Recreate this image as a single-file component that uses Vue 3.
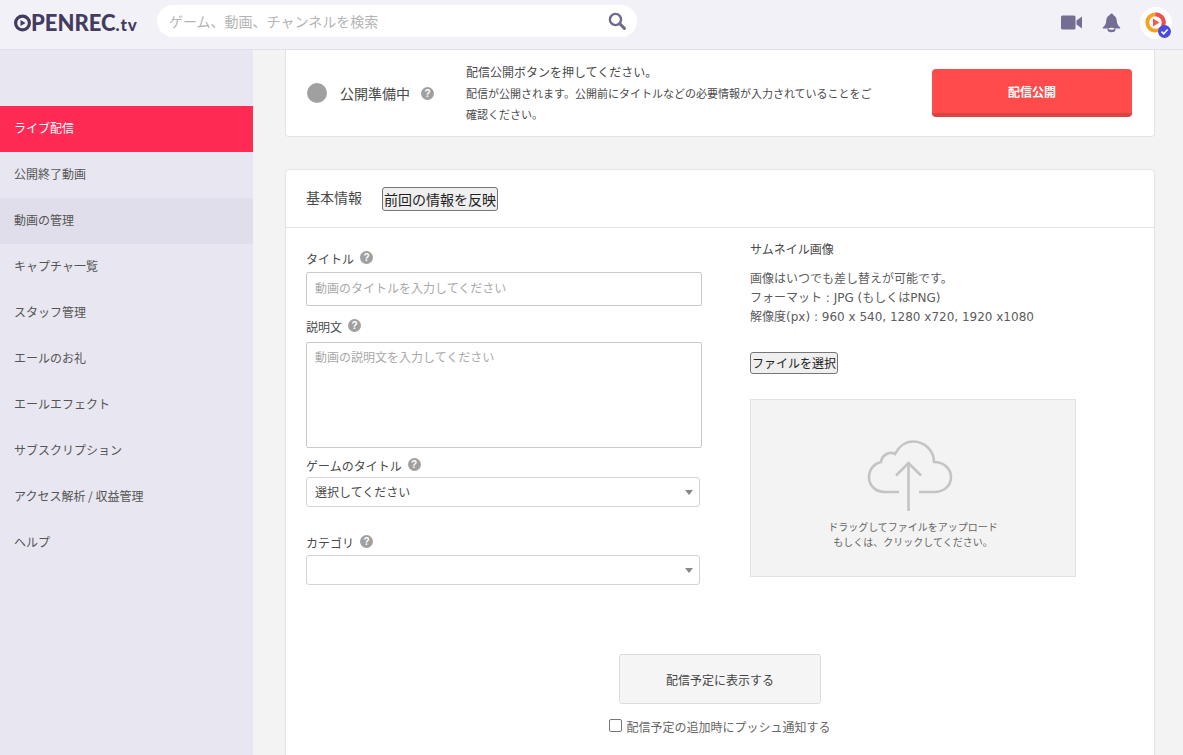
<template>
  <div class="page">
    <header class="topbar">
      <div class="logo">
        <svg class="logo-o" width="18" height="18" viewBox="0 0 18 18">
          <circle cx="8.5" cy="9" r="6.9" fill="none" stroke="#433c5f" stroke-width="3.2" />
          <path d="M6.5 5.9 L11.6 9 L6.5 12.1 Z" fill="#433c5f" />
        </svg>
        <span class="logo-main">PENREC</span><span class="logo-tv">.tv</span>
      </div>
      <div class="search">
        <span class="search-text">ゲーム、動画、チャンネルを検索</span>
        <svg width="18" height="18" viewBox="0 0 18 18">
          <circle cx="7.5" cy="7.5" r="5.6" fill="none" stroke="#6f6a8a" stroke-width="2.4" />
          <path d="M11.8 11.8 L16.4 16.4" stroke="#6f6a8a" stroke-width="3" stroke-linecap="round" />
        </svg>
      </div>
      <div class="top-icons">
        <svg class="icon-video" width="21" height="15" viewBox="0 0 21 15">
          <rect x="0" y="0.5" width="14.5" height="14" rx="1.5" fill="#746e94" />
          <path d="M15.5 5.5 L21 1.5 V13.5 L15.5 9.5 Z" fill="#746e94" />
        </svg>
        <svg width="19" height="20" viewBox="0 0 19 20">
          <circle cx="9.5" cy="2.2" r="1.8" fill="#746e94" />
          <path d="M9.5 2 C5.6 2 4.4 5 4.2 8 C4 11 3 12.6 1.2 14 C0.4 14.7 0.6 15.6 1.6 15.6 H17.4 C18.4 15.6 18.6 14.7 17.8 14 C16 12.6 15 11 14.8 8 C14.6 5 13.4 2 9.5 2 Z" fill="#746e94" />
          <ellipse cx="9.5" cy="16.8" rx="4" ry="2.4" fill="#746e94" />
          <ellipse cx="9.5" cy="15.8" rx="3" ry="1" fill="#f2f1f8" />
        </svg>
        <div class="avatar">
          <svg width="32" height="32" viewBox="0 0 32 32">
            <circle cx="16" cy="16" r="16" fill="#fff" />
            <circle cx="15.5" cy="15.5" r="8.2" fill="none" stroke="#f7a11f" stroke-width="3.8" />
            <path d="M15.5 7.3 A8.2 8.2 0 0 1 23 19" fill="none" stroke="#ef4d57" stroke-width="3.8" />
            <path d="M13 11.5 L19.5 15.5 L13 19.5 Z" fill="#f0594f" />
            <circle cx="24.5" cy="24.5" r="6.5" fill="#4a4adf" />
            <path d="M21.5 24.6 L23.7 26.8 L27.6 22.6" fill="none" stroke="#fff" stroke-width="1.5" />
          </svg>
        </div>
      </div>
    </header>

    <div class="layout">
      <nav class="sidebar">
        <a
          v-for="item in menu"
          :key="item.label"
          class="nav-item"
          :class="{ active: item.active, hover: item.hover }"
        >{{ item.label }}</a>
      </nav>

      <main class="content">
        <section class="card status-card">
          <span class="status-dot"></span>
          <span class="status-label">公開準備中</span>
          <span class="help help-status">?</span>
          <div class="status-text">
            <p class="status-first">配信公開ボタンを押してください。</p>
            <p>配信が公開されます。公開前にタイトルなどの必要情報が入力されていることをご確認ください。</p>
          </div>
          <button class="publish" type="button">配信公開</button>
        </section>

        <section class="card form-card">
          <div class="form-head">
            <span class="head-title">基本情報</span>
            <button class="native-btn" type="button">前回の情報を反映</button>
          </div>
          <div class="form-body">
            <div class="col-left">
              <div class="label label-title">タイトル<span class="help">?</span></div>
              <div class="input placeholder">動画のタイトルを入力してください</div>
              <div class="label label-desc">説明文<span class="help">?</span></div>
              <div class="textarea placeholder">動画の説明文を入力してください</div>
              <div class="label label-game">ゲームのタイトル<span class="help">?</span></div>
              <div class="select">選択してください<span class="caret"></span></div>
              <div class="label label-cat">カテゴリ<span class="help">?</span></div>
              <div class="select"><span class="caret"></span></div>
            </div>
            <div class="col-right">
              <div class="thumb-title">サムネイル画像</div>
              <p class="thumb-info">画像はいつでも差し替えが可能です。<br />フォーマット : JPG (もしくはPNG)<br />解像度(px) : 960 x 540, 1280 x720, 1920 x1080</p>
              <button class="native-btn file-btn" type="button">ファイルを選択</button>
              <div class="dropzone">
                <svg class="cloud" width="88" height="72" viewBox="0 0 88 72">
                  <path d="M32 52 H18 C8 52 2 45 2 37 C2 29 8 23 14 22 C15 15 22 11 28 14 C32 6 39 1.5 46 1.5 C58 1.5 67 11 67 22 C77 22 84 29 84 37 C84 46 77 52 67 52 H52" fill="none" stroke="#c4c4c4" stroke-width="2.6" />
                  <path d="M41.5 71 V23 M29 35.5 L41.5 23 L54 35.5" fill="none" stroke="#c4c4c4" stroke-width="2.6" />
                </svg>
                <p class="drop-text">ドラッグしてファイルをアップロード<br />もしくは、クリックしてください。</p>
              </div>
            </div>
          </div>
          <div class="form-foot">
            <button class="schedule" type="button">配信予定に表示する</button>
            <label class="push"><span class="checkbox"></span>配信予定の追加時にプッシュ通知する</label>
          </div>
        </section>
      </main>
    </div>
  </div>
</template>

<script setup>
const menu = [
  { label: 'ライブ配信', active: true },
  { label: '公開終了動画' },
  { label: '動画の管理', hover: true },
  { label: 'キャプチャ一覧' },
  { label: 'スタッフ管理' },
  { label: 'エールのお礼' },
  { label: 'エールエフェクト' },
  { label: 'サブスクリプション' },
  { label: 'アクセス解析 / 収益管理' },
  { label: 'ヘルプ' }
]
</script>

<style>
html, body {
  margin: 0;
  overflow: hidden;
}
</style>

<style scoped>
.page {
  width: 1183px;
  height: 755px;
  overflow: hidden;
  font-family: "Noto Sans CJK JP", "Liberation Sans", sans-serif;
  font-size: 12px;
  color: #4a4a4a;
  background: #f3f3f3;
}

.topbar {
  height: 49px;
  background: #f2f1f8;
  border-bottom: 1px solid #e2e0ea;
  display: flex;
  align-items: center;
  padding: 0 11px 0 14px;
}

.logo {
  width: 143px;
  display: flex;
  align-items: center;
  color: #433c5f;
  font-family: Lato, "Liberation Sans", sans-serif;
  font-weight: 900;
  line-height: 1;
  margin-top: -3px;
}

.logo-main {
  font-size: 22px;
  margin-left: -1px;
  letter-spacing: 0;
}

.logo-tv {
  font-size: 17px;
  font-weight: 900;
  margin-top: 3px;
  letter-spacing: 0.9px;
}

.search {
  width: 480px;
  height: 32px;
  margin-top: -7px;
  box-sizing: border-box;
  background: #fff;
  border-radius: 16px;
  display: flex;
  align-items: center;
  justify-content: space-between;
  padding: 0 11px 0 12px;
}

.search-text {
  font-size: 14px;
  color: #b4b4b4;
}

.top-icons {
  margin-left: auto;
  display: flex;
  align-items: center;
  margin-top: -4px;
}

.icon-video {
  margin-right: 20px;
}

.avatar {
  margin-left: 19px;
  height: 32px;
}

.layout {
  display: flex;
  height: 705px;
}

.sidebar {
  width: 253px;
  flex: none;
  background: #e8e6f0;
  padding-top: 56px;
  box-sizing: border-box;
}

.nav-item {
  display: block;
  height: 46px;
  line-height: 44px;
  padding-left: 14px;
  font-size: 12px;
  color: #555;
}

.nav-item.active {
  background: #ff2b55;
  color: #fff;
}

.nav-item.hover {
  background: #e0deea;
}

.content {
  flex: 1;
  padding: 0 28px 0 32px;
}

.card {
  background: #fff;
  border: 1px solid #e4e4e4;
  border-radius: 4px;
  box-sizing: border-box;
}

.status-card {
  height: 87px;
  border-top: none;
  border-radius: 0 0 4px 4px;
  display: flex;
  align-items: center;
  padding: 0 22px 0 21px;
  margin-bottom: 32px;
}

.status-dot {
  width: 20px;
  height: 20px;
  border-radius: 50%;
  background: #a0a0a0;
  margin-right: 13px;
}

.status-label {
  font-size: 14px;
}

.help {
  display: inline-block;
  width: 13px;
  height: 13px;
  line-height: 13px;
  border-radius: 50%;
  background: #a0a0a0;
  color: #fff;
  font-size: 10px;
  font-weight: 700;
  text-align: center;
  margin-left: 6px;
  vertical-align: 3px;
  font-family: "Liberation Sans", sans-serif;
}

.help-status {
  margin-left: 11px;
  margin-top: 1px;
}

.status-text {
  width: 410px;
  margin-left: 32px;
  font-size: 11px;
  line-height: 21px;
  flex: none;
}

.status-text p {
  margin: 0;
}

.status-text .status-first {
  font-size: 12px;
  margin-bottom: 1px;
}

.publish {
  margin-left: auto;
  width: 200px;
  height: 48px;
  background: #ff4b4b;
  border: none;
  border-bottom: 4px solid #dc4444;
  border-radius: 4px;
  color: #fff;
  font-family: inherit;
  font-size: 12px;
  font-weight: 700;
}

.form-card {
  height: 640px;
}

.form-head {
  height: 57px;
  border-bottom: 1px solid #e4e4e4;
  display: flex;
  align-items: center;
  padding-left: 20px;
}

.head-title {
  font-size: 14px;
  margin-right: 20px;
  margin-top: -3px;
}

.native-btn {
  font-family: inherit;
  font-size: 14px;
  color: #222;
  background: #efefef;
  border: 1px solid #767676;
  border-radius: 3px;
  padding: 0 1px;
  height: 24px;
  line-height: 20px;
}

.form-body {
  display: flex;
  padding-left: 20px;
}

.col-left {
  width: 396px;
  flex: none;
}

.col-right {
  margin-left: 48px;
  padding-top: 12px;
}

.label {
  line-height: 18px;
}

.label-title {
  margin-top: 22px;
  margin-bottom: 4px;
}

.label-desc {
  margin-top: 12px;
  margin-bottom: 6px;
}

.label-game {
  margin-top: 9px;
  margin-bottom: 2px;
}

.label-cat {
  margin-top: 27px;
  margin-bottom: 3px;
}

.input,
.textarea {
  border: 1px solid #c9c9c9;
  border-radius: 2px;
  padding: 0 8px;
  box-sizing: border-box;
}

.input {
  height: 34px;
  line-height: 30px;
}

.textarea {
  height: 106px;
  padding-top: 5px;
}

.placeholder {
  color: #a9a9a9;
}

.select {
  position: relative;
  width: 394px;
  height: 30px;
  line-height: 28px;
  box-sizing: border-box;
  border: 1px solid #d4d4d4;
  border-radius: 3px;
  padding-left: 8px;
}

.caret {
  position: absolute;
  right: 6px;
  top: 12px;
  width: 0;
  height: 0;
  border-left: 4px solid transparent;
  border-right: 4px solid transparent;
  border-top: 5px solid #888;
}

.thumb-title {
  line-height: 18px;
}

.thumb-info {
  margin: 12px 0 0;
  line-height: 19px;
  color: #5c5c5c;
  font-family: "DejaVu Sans", "Noto Sans CJK JP", sans-serif;
}

.file-btn {
  display: block;
  margin-top: 25px;
  font-size: 12px;
  height: 22px;
  color: #222;
}

.dropzone {
  margin-top: 25px;
  width: 326px;
  height: 178px;
  box-sizing: border-box;
  background: #f3f3f3;
  border: 1px solid #e2e2e2;
  display: flex;
  flex-direction: column;
  align-items: center;
  padding-top: 40px;
}

.cloud {
  margin-left: -5px;
}

.drop-text {
  margin: 7px 0 0;
  font-size: 10px;
  line-height: 15px;
  text-align: center;
  color: #666;
}

.form-foot {
  display: flex;
  flex-direction: column;
  align-items: center;
  margin-top: 69px;
}

.schedule {
  width: 202px;
  height: 50px;
  font-family: inherit;
  font-size: 12px;
  color: #444;
  background: #f5f5f5;
  border: 1px solid #dcdcdc;
  border-radius: 3px;
}

.push {
  margin-top: 13px;
  display: flex;
  align-items: center;
  line-height: 20px;
  color: #666;
}

.checkbox {
  width: 11px;
  height: 11px;
  border: 1px solid #767676;
  border-radius: 2px;
  background: #fff;
  margin-right: 4px;
  margin-top: -3px;
}
</style>
